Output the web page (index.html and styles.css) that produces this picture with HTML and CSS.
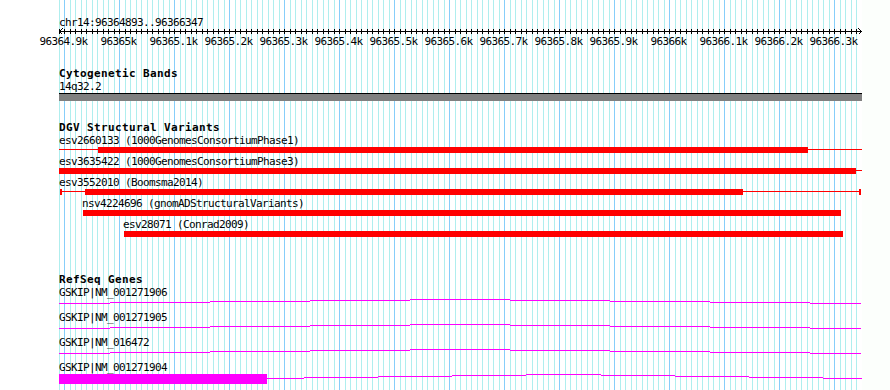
FILE: index.html
```html
<!DOCTYPE html>
<html lang="en">
<head>
<meta charset="utf-8">
<title>chr14:96364893..96366347</title>
<link rel="stylesheet" href="styles.css">
</head>
<body>
<div class="image">
  <div class="panel">
    <section class="ruler">
      <div class="ref">chr14:96364893..96366347</div>
      <div class="axis">
        <svg class="arrow arrow-l" width="4" height="7" viewBox="0 0 4 7"><path d="M3.5 0.5L0.5 3.5L3.5 6.5"/></svg>
        <svg class="arrow arrow-r" width="4" height="7" viewBox="0 0 4 7"><path d="M0.5 0.5L3.5 3.5L0.5 6.5"/></svg>
      </div>
      <div class="ticks">
        <span>96364.9k</span><span>96365k</span><span>96365.1k</span><span>96365.2k</span><span>96365.3k</span><span>96365.4k</span><span>96365.5k</span><span>96365.6k</span><span>96365.7k</span><span>96365.8k</span><span>96365.9k</span><span>96366k</span><span>96366.1k</span><span>96366.2k</span><span>96366.3k</span>
      </div>
    </section>

    <section class="track cyto">
      <div class="track-title">Cytogenetic Bands</div>
      <div class="label">14q32.2</div>
      <div class="band"></div>
    </section>

    <section class="track dgv">
      <div class="track-title">DGV Structural Variants</div>
      <div class="feature">
        <div class="label">esv2660133 (1000GenomesConsortiumPhase1)</div>
        <div class="glyph">
          <i class="thin" style="left:0;width:803px"></i>
          <i class="thick" style="left:39px;width:710px"></i>
        </div>
      </div>
      <div class="feature">
        <div class="label">esv3635422 (1000GenomesConsortiumPhase3)</div>
        <div class="glyph">
          <i class="thin" style="left:0;width:803px"></i>
          <i class="thick" style="left:0;width:797px"></i>
        </div>
      </div>
      <div class="feature">
        <div class="label">esv3552010 (Boomsma2014)</div>
        <div class="glyph">
          <i class="thin" style="left:1px;width:801px"></i>
          <i class="thick" style="left:1px;width:2px"></i>
          <i class="thick" style="left:26px;width:658px"></i>
          <i class="thick" style="left:800px;width:2px"></i>
        </div>
      </div>
      <div class="feature">
        <div class="label" style="padding-left:23px">nsv4224696 (gnomADStructuralVariants)</div>
        <div class="glyph">
          <i class="thick" style="left:24px;width:758px"></i>
        </div>
      </div>
      <div class="feature">
        <div class="label" style="padding-left:64px">esv28071 (Conrad2009)</div>
        <div class="glyph">
          <i class="thick" style="left:65px;width:719px"></i>
        </div>
      </div>
    </section>

    <section class="track refseq">
      <div class="track-title">RefSeq Genes</div>
      <div class="gene">
        <div class="label">GSKIP|NM_001271906</div>
        <div class="gene-glyph">
          <svg class="model" width="803" height="10" viewBox="0 0 803 10"><path class="intron" d="M0 4.5H51M51 3.5H151M151 2.5H251M251 1.5H351M351 0.5H451M451 1.5H551M551 2.5H651M651 3.5H751M751 4.5H802"/></svg>
        </div>
      </div>
      <div class="gene">
        <div class="label">GSKIP|NM_001271905</div>
        <div class="gene-glyph">
          <svg class="model" width="803" height="10" viewBox="0 0 803 10"><path class="intron" d="M0 4.5H51M51 3.5H151M151 2.5H251M251 1.5H351M351 0.5H451M451 1.5H551M551 2.5H651M651 3.5H751M751 4.5H802"/></svg>
        </div>
      </div>
      <div class="gene">
        <div class="label">GSKIP|NM_016472</div>
        <div class="gene-glyph">
          <svg class="model" width="803" height="10" viewBox="0 0 803 10"><path class="intron" d="M0 4.5H51M51 3.5H151M151 2.5H251M251 1.5H351M351 0.5H451M451 1.5H551M551 2.5H651M651 3.5H751M751 4.5H802"/></svg>
        </div>
      </div>
      <div class="gene">
        <div class="label">GSKIP|NM_001271904</div>
        <div class="gene-glyph">
          <svg class="model" width="803" height="10" viewBox="0 0 803 10"><rect class="exon" x="0" y="0" width="208" height="10"/><path class="intron" d="M208 4.5H245M245 3.5H319M319 2.5H393M393 1.5H467M467 0.5H542M542 1.5H616M616 2.5H690M690 3.5H764M764 4.5H803"/></svg>
        </div>
      </div>
    </section>
  </div>
</div>
</body>
</html>
```

FILE: styles.css
```css
html, body {
  margin: 0;
  padding: 0;
}

body {
  width: 890px;
  height: 390px;
  overflow: hidden;
  background: #fcfffc;
  font-family: "DejaVu Sans Mono", "Liberation Mono", monospace;
  font-size: 11px;
  line-height: 13px;
  letter-spacing: -0.62px;
  color: #000;
}

.image {
  width: 862px;
  height: 390px;
  background: #fff;
}

.panel {
  margin-left: 59px;
  width: 803px;
  height: 390px;
  background-image:
    linear-gradient(to right, #87cefa 0 1px, transparent 1px),
    linear-gradient(to right, #afeeee 0 1px, transparent 1px 6px, #afeeee 6px 7px, transparent 7px);
  background-size: 55px 100%, 11px 100%;
  background-position: 5px 0, 5px 0;
  background-repeat: repeat-x;
}

/* ruler */
.ruler {
  padding-top: 16px;
}

.ref {
  height: 13px;
  white-space: nowrap;
}

.axis {
  position: relative;
  height: 5px;
  background:
    linear-gradient(#000, #000) 0 2px / 100% 1px no-repeat,
    linear-gradient(to right, #000 0 1px, transparent 1px 6px, #000 6px 7px, transparent 7px) 5px 0 / 11px 100% repeat-x;
}

.arrow {
  position: absolute;
  top: -1px;
  fill: none;
  stroke: #000;
  stroke-width: 1;
  shape-rendering: crispEdges;
}

.arrow-l { left: 0; }
.arrow-r { right: 0; }

.ticks {
  display: flex;
  margin-top: 1px;
  margin-left: -23px;
  height: 13px;
  white-space: nowrap;
}

.ticks span {
  flex: 0 0 55px;
  text-align: center;
}

/* tracks */
.track-title {
  font-weight: bold;
  letter-spacing: 0.38px;
  height: 13px;
  white-space: nowrap;
}

.label {
  height: 13px;
  white-space: nowrap;
}

.cyto {
  margin-top: 19px;
}

.band {
  height: 7px;
  border-top: 1px solid #000;
  background: #808080;
}

.dgv {
  margin-top: 20px;
  display: flex;
  flex-direction: column;
}

.feature {
  margin-bottom: 2px;
}

.glyph {
  position: relative;
  height: 6px;
}

.glyph i {
  position: absolute;
  display: block;
  background: #f00;
}

.glyph .thin {
  top: 2px;
  height: 1px;
}

.glyph .thick {
  top: 0;
  height: 6px;
}

.refseq {
  margin-top: 34px;
}

.gene {
  margin-bottom: 2px;
}

.gene-glyph {
  height: 10px;
}

.model {
  display: block;
  shape-rendering: crispEdges;
}

.intron {
  fill: none;
  stroke: #f0f;
  stroke-width: 1;
}

.exon {
  fill: #f0f;
}
```
